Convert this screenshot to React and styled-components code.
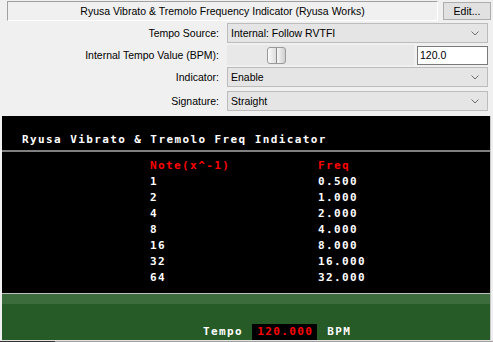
import React from 'react';
import styled, { createGlobalStyle } from 'styled-components';

const GlobalStyle = createGlobalStyle`
    html, body {
        margin: 0;
        padding: 0;
        background: #f0f0f0;
        overflow: hidden;
    }
    body {
        font-family: "Liberation Sans", Arial, sans-serif;
        font-size: 10.5px;
        color: #000;
    }
`

const rows = [
    { note: '1', freq: '0.500' },
    { note: '2', freq: '1.000' },
    { note: '4', freq: '2.000' },
    { note: '8', freq: '4.000' },
    { note: '16', freq: '8.000' },
    { note: '32', freq: '16.000' },
    { note: '64', freq: '32.000' },
]

const Chevron = () => (
    <svg width="8" height="5" viewBox="0 0 8 5">
        <polyline points="0.5,0.5 4,4 7.5,0.5" fill="none" stroke="#6d6d6d" strokeWidth="1" />
    </svg>
)

const Combo = ({ value }) => (
    <ComboBox>
        <span>{value}</span>
        <Chevron />
    </ComboBox>
)

const App = () => {
    return (
        <Page>
            <GlobalStyle />
            <TitleRow>
                <TitleBox>Ryusa Vibrato &amp; Tremolo Frequency Indicator (Ryusa Works)</TitleBox>
                <EditButton>Edit...</EditButton>
            </TitleRow>
            <Form>
                <Label>Tempo Source:</Label>
                <Combo value="Internal: Follow RVTFI" />
                <Label>Internal Tempo Value (BPM):</Label>
                <SliderRow>
                    <Track>
                        <Thumb />
                    </Track>
                    <ValueInput>120.0</ValueInput>
                </SliderRow>
                <Label>Indicator:</Label>
                <Combo value="Enable" />
                <Label>Signature:</Label>
                <Combo value="Straight" />
            </Form>
            <Display>
                <DisplayTitle>Ryusa Vibrato &amp; Tremolo Freq Indicator</DisplayTitle>
                <Divider />
                <Table>
                    <Cell $red>Note(x^-1)</Cell>
                    <Cell $red>Freq</Cell>
                    {rows.map((r) => (
                        <React.Fragment key={r.note}>
                            <Cell>{r.note}</Cell>
                            <Cell>{r.freq}</Cell>
                        </React.Fragment>
                    ))}
                </Table>
                <Footer>
                    <FooterBand />
                    <TempoRow>
                        <PixelText>Tempo</PixelText>
                        <TempoBox>120.000</TempoBox>
                        <PixelText>BPM</PixelText>
                    </TempoRow>
                </Footer>
            </Display>
            <BottomEdge>
                <EdgeThumb />
            </BottomEdge>
        </Page>
    );
}

const Page = styled.div`
    width: 493px;
    height: 342px;
    overflow: hidden;
    display: flex;
    flex-direction: column;
`

const TitleRow = styled.div`
    display: flex;
    align-items: flex-start;
    padding-top: 1px;
    height: 20px;
`

const TitleBox = styled.div`
    margin-left: 7px;
    width: 429px;
    height: 18px;
    border-top: 1px solid #a0a0a0;
    border-left: 1px solid #a0a0a0;
    border-bottom: 1px solid #ffffff;
    border-right: 1px solid #ffffff;
    display: flex;
    align-items: center;
    justify-content: center;
    white-space: nowrap;
`

const EditButton = styled.div`
    margin-left: 5px;
    margin-top: 1px;
    width: 46px;
    height: 16px;
    background: #e1e1e1;
    border: 1px solid #adadad;
    display: flex;
    align-items: center;
    justify-content: center;
`

const Form = styled.div`
    margin-top: 2px;
    display: grid;
    grid-template-columns: 219px 261px;
    grid-template-rows: 20px 20px 22px 20px;
    align-items: start;
    column-gap: 8px;
    row-gap: 2px;
`

const Label = styled.div`
    height: 20px;
    display: flex;
    align-items: center;
    justify-content: flex-end;
    white-space: nowrap;
`

const ComboBox = styled.div`
    box-sizing: border-box;
    height: 20px;
    background: #e5e5e5;
    border: 1px solid #bcbcbc;
    display: flex;
    align-items: center;
    justify-content: space-between;
    padding: 0 8px 0 3px;
`

const SliderRow = styled.div`
    display: flex;
    align-items: center;
    height: 20px;
`

const Track = styled.div`
    width: 187px;
    height: 20px;
    background: #e8e8e8;
    display: flex;
    align-items: center;
`

const Thumb = styled.div`
    box-sizing: border-box;
    margin-left: 40px;
    width: 19px;
    height: 17px;
    border: 1px solid #9a9a9a;
    border-radius: 3px;
    background:
        linear-gradient(#8c8c8c, #8c8c8c) center / 1px 100% no-repeat,
        linear-gradient(90deg, #fbfbfb, #dedede 45%, #f4f4f4 55%, #cfcfcf);
`

const ValueInput = styled.div`
    box-sizing: border-box;
    margin-left: 3px;
    width: 71px;
    height: 19px;
    background: #ffffff;
    border: 1px solid #7a7a7a;
    padding-left: 2px;
    display: flex;
    align-items: center;
`

const Display = styled.div`
    margin-top: 5px;
    margin-left: 2px;
    width: 488px;
    height: 224px;
    flex-shrink: 0;
    border-right: 1px solid #c8c8c8;
    background: #000;
    overflow: hidden;
    display: flex;
    flex-direction: column;
    font-family: "DejaVu Sans Mono", "Liberation Mono", monospace;
    font-weight: bold;
    font-size: 11px;
    letter-spacing: 1.4px;
    color: #fff;
`

const DisplayTitle = styled.div`
    height: 36px;
    box-sizing: border-box;
    padding: 17px 0 0 20px;
    line-height: 13px;
    white-space: nowrap;
`

const Divider = styled.div`
    height: 2px;
    background: #808080;
`

const Table = styled.div`
    display: grid;
    grid-template-columns: 168px auto;
    grid-auto-rows: 16px;
    padding: 6px 0 7px 148px;
    line-height: 16px;
`

const Cell = styled.div`
    color: ${(p) => (p.$red ? '#ff0000' : '#ffffff')};
    white-space: nowrap;
`

const Footer = styled.div`
    flex: 1;
    border-top: 1px solid #c0c0c0;
    background: #265a26;
    display: flex;
    flex-direction: column;
`

const FooterBand = styled.div`
    height: 10px;
    background: #3c6c3c;
`

const TempoRow = styled.div`
    display: flex;
    align-items: flex-start;
    margin-top: 20px;
    padding-left: 201px;
    line-height: 16px;
`

const PixelText = styled.span`
    color: #fff;
    white-space: nowrap;
`

const TempoBox = styled.div`
    margin-left: 9px;
    margin-right: 10px;
    width: 65px;
    box-sizing: border-box;
    padding-left: 5px;
    background: #000;
    color: #ff0000;
    height: 16px;
`

const BottomEdge = styled.div`
    height: 1px;
    flex-shrink: 0;
    border-top: 1px solid #e3e3e3;
    background: #a0a0a0;
`

const EdgeThumb = styled.div`
    width: 55px;
    height: 1px;
    background: #333;
`

export default App;
